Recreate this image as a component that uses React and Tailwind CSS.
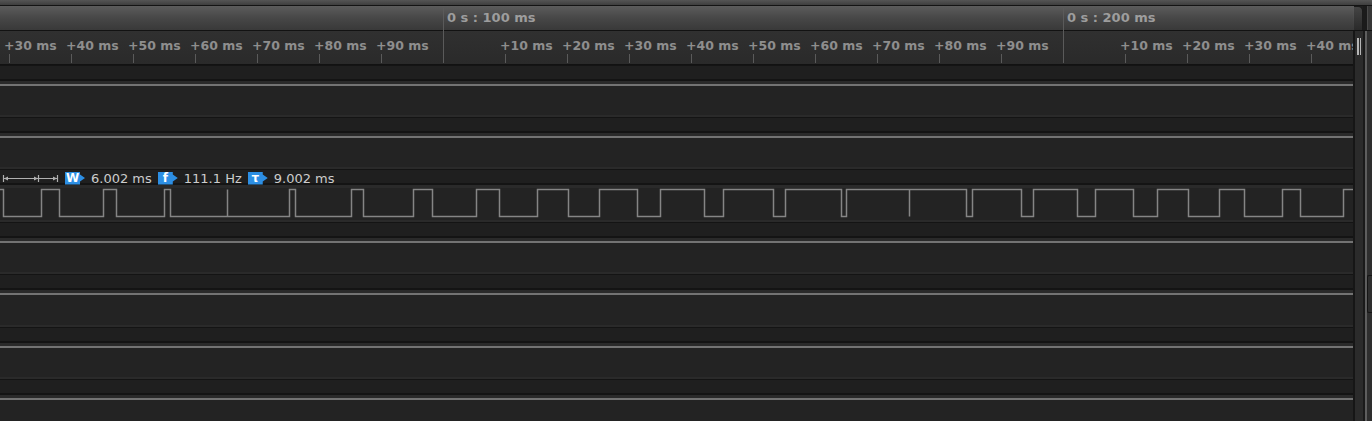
import React from "react";

// time axis: 62px per 10 ms, 100 ms mark at x=443
const PX_PER_DIV = 62;
const ORIGIN = 443;

const TICKS = [];
for (let k = -7; k <= 14; k++) {
  if (k === 0 || k === 10) continue;
  TICKS.push({ x: ORIGIN + k * PX_PER_DIV, label: `+${(((k % 10) + 10) % 10) * 10} ms` });
}

const MARKS = [
  { x: ORIGIN, label: "0 s : 100 ms" },
  { x: ORIGIN + 10 * PX_PER_DIV, label: "0 s : 200 ms" },
];

// signal starts high, each edge toggles the level
const EDGES = [
  3, 41, 59, 103, 116, 164, 170, 289, 295, 351, 363, 413, 432, 476, 499, 537, 568, 599,
  637, 660, 704, 723, 773, 785, 841, 846, 966, 972, 1021, 1033, 1077, 1095, 1133, 1157,
  1188, 1219, 1244, 1282, 1300, 1343,
];

const HI = 1.5;
const LO = 28.5;

function wavePath() {
  let level = true;
  let d = `M0 ${HI}`;
  EDGES.forEach((x) => {
    const px = x + 0.5;
    d += ` H${px}`;
    level = !level;
    d += ` V${level ? HI : LO}`;
  });
  d += " H1353";
  // glitches
  d += ` M227.5 ${LO} V${HI} M909.5 ${HI} V${LO}`;
  return d;
}

const CHANNELS = [
  { h: "h-[52px]" },
  { h: "h-[52px]" },
  { h: "h-[53px]", wave: true },
  { h: "h-[52px]" },
  { h: "h-[53px]" },
  { h: "h-[52px]" },
  { h: "h-[53px]" },
];

const Badge = ({ children }) => (
  <div className="w-[20px] h-[13px] shrink-0 bg-[#2d8fe4] [clip-path:polygon(0_0,15px_0,15px_3px,20px_6.5px,15px_10px,15px_100%,0_100%)] flex items-center">
    <span className="w-[15px] text-center text-[12px] leading-none font-bold text-white">{children}</span>
  </div>
);

const MeasureIcon = () => (
  <svg width="57" height="9" viewBox="0 0 57 9" className="shrink-0">
    <g stroke="#b0b0b0" strokeWidth="1.2" fill="none">
      <path d="M1.5 1 V8 M36.5 1 V8 M55.5 1 V8" />
      <path d="M2 4.5 H55" />
    </g>
    <g fill="#b0b0b0">
      <path d="M2 4.5 L6 2.5 V6.5 Z" />
      <path d="M36 4.5 L32 2.5 V6.5 Z" />
      <path d="M55 4.5 L51 2.5 V6.5 Z" />
    </g>
  </svg>
);

const Measurement = () => (
  <div className="flex items-center h-full pt-[3px] pl-[2px] gap-[6px] text-[13px] leading-none text-[#cccccc]">
    <MeasureIcon />
    <Badge>W</Badge>
    <span>6.002 ms</span>
    <Badge>f</Badge>
    <span>111.1 Hz</span>
    <Badge>τ</Badge>
    <span>9.002 ms</span>
  </div>
);

const Channel = ({ h, wave }) => (
  <div className={`${h} flex flex-col shrink-0`}>
    <div className="h-[16px] bg-[#1f1f1f] border-t border-b-2 border-[#141414] shrink-0">
      {wave && <Measurement />}
    </div>
    <div className="flex-1 bg-[#232323] border-t-[3px] border-b-2 border-[#2a2a2a]">
      {wave ? (
        <svg width="1353" height="32" className="block">
          <path d={wavePath()} stroke="#858585" strokeWidth="1.5" fill="none" />
        </svg>
      ) : (
        <div className="h-[2px] bg-[#737373]" />
      )}
    </div>
  </div>
);

const Ruler = () => (
  <div className="relative h-[59px] shrink-0 overflow-hidden">
    <div className="h-[25px] bg-gradient-to-b from-[#5c5c5c] via-[#474747] to-[#393939] border-b border-[#121212]" />
    <div className="h-[34px] bg-gradient-to-b from-[#303030] to-[#2a2a2a] border-b border-[#121212]" />

    {MARKS.map((m) => (
      <React.Fragment key={m.label}>
        <div className="absolute top-[2px] bottom-[2px] w-px bg-[#5a5a5a]" style={{ left: m.x }} />
        <span
          className="absolute top-[4px] text-[13px] leading-[15px] font-bold text-[#9d9d9d] whitespace-nowrap"
          style={{ left: m.x + 4 }}
        >
          {m.label}
        </span>
      </React.Fragment>
    ))}

    {TICKS.map((t) => (
      <React.Fragment key={t.x}>
        <span
          className="absolute top-[32px] text-[12.5px] leading-[15px] font-bold text-[#8e8e8e] whitespace-nowrap"
          style={{ left: t.x - 5 }}
        >
          {t.label}
        </span>
        <div className="absolute top-[48px] h-[9px] w-px bg-[#5a5a5a]" style={{ left: t.x }} />
      </React.Fragment>
    ))}
  </div>
);

const SideColumn = () => (
  <div className="w-[19px] flex flex-col shrink-0">
    <div className="h-[25px] flex shrink-0 border-b border-[#121212]">
      <div className="w-[1px] bg-gradient-to-b from-[#5c5c5c] to-[#393939]" />
      <div className="w-[9px] rounded-tr-[5px] bg-gradient-to-b from-[#444444] to-[#2a2a2a] border-t border-r border-[#1a1a1a]" />
      <div className="w-[4px] bg-[#1b1b1b]" />
      <div className="flex-1 bg-[#363636] border-l border-[#4a4a4a]" />
    </div>
    <div className="flex-1 flex">
      <div className="w-[2px] bg-[#161616]" />
      <div className="w-[8px] bg-[#2b2b2b] pt-[7px] flex justify-center gap-[1px]">
        <div className="w-[1.5px] h-[17px] bg-[#b5b5b5]" />
        <div className="w-[1.5px] h-[17px] bg-[#b5b5b5]" />
      </div>
      <div className="w-[2px] bg-[#1a1a1a]" />
      <div className="w-[2px] bg-[#5e5e5e]" />
      <div className="flex-1 bg-[#2e2e2e] flex flex-col">
        <div className="h-[244px]" />
        <div className="h-[38px] border border-r-0 border-[#151515] rounded-l-[2px]" />
      </div>
    </div>
  </div>
);

export default function App() {
  return (
    <div className="w-[1372px] h-[421px] overflow-hidden bg-[#1f1f1f] flex flex-col font-['DejaVu_Sans',sans-serif]">
      <div className="h-[6px] shrink-0 bg-gradient-to-b from-[#555555] to-[#3e3e3e] border-b border-[#141414]" />
      <div className="flex-1 flex min-h-0">
        <div className="w-[1353px] flex flex-col shrink-0 min-h-0">
          <Ruler />
          {CHANNELS.map((c, i) => (
            <Channel key={i} {...c} />
          ))}
        </div>
        <SideColumn />
      </div>
    </div>
  );
}
